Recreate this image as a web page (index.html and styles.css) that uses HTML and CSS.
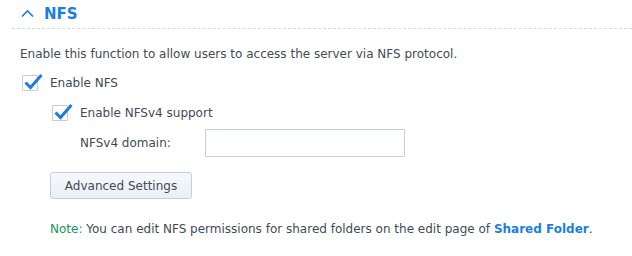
FILE: index.html
```html
<!DOCTYPE html>
<html lang="en">
<head>
  <meta charset="UTF-8">
  <title>NFS</title>
  <link rel="stylesheet" href="styles.css">
</head>
<body>
  <div class="panel">
    <div class="section-head">
      <svg class="chevron" width="13" height="9" viewBox="0 0 13 9">
        <path d="M1 7.5 L6.5 2 L12 7.5" fill="none" stroke="#1a7fe0" stroke-width="1.7"/>
      </svg>
      <span class="section-title">NFS</span>
    </div>

    <div class="section-body">
      <p class="desc">Enable this function to allow users to access the server via NFS protocol.</p>

      <label class="check">
        <span class="box">
          <svg width="20" height="18" viewBox="0 0 20 18">
            <path d="M2.5 9.5 L7.5 14.5 L18.5 2" fill="none" stroke="#1c7ce0" stroke-width="3"/>
          </svg>
        </span>
        Enable NFS
      </label>

      <div class="indent">
        <label class="check">
          <span class="box">
            <svg width="20" height="18" viewBox="0 0 20 18">
              <path d="M2.5 9.5 L7.5 14.5 L18.5 2" fill="none" stroke="#1c7ce0" stroke-width="3"/>
            </svg>
          </span>
          Enable NFSv4 support
        </label>

        <div class="field">
          <span class="field-label">NFSv4 domain:</span>
          <input class="text-input" type="text">
        </div>
      </div>

      <button class="btn">Advanced Settings</button>

      <p class="note"><span class="note-label">Note:</span> You can edit NFS permissions for shared folders on the edit page of <a class="link" href="#">Shared Folder</a>.</p>
    </div>
  </div>
</body>
</html>
```

FILE: styles.css
```css
* {
  margin: 0;
  padding: 0;
  box-sizing: border-box;
}

body {
  font-family: 'DejaVu Sans', Verdana, sans-serif;
  font-size: 12px;
  color: #414b55;
  background: #fff;
}

.panel {
  padding-left: 12px;
}

.section-head {
  display: flex;
  align-items: center;
  height: 29px;
  padding-left: 9px;
  padding-bottom: 1px;
  border-bottom: 1px dashed #d5dae0;
}

.chevron {
  margin-right: 10px;
  margin-top: -1px;
}

.section-title {
  font-size: 15px;
  font-weight: bold;
  color: #1a7fe0;
}

.section-body {
  padding: 17px 0 0 8px;
}

.desc {
  line-height: 16px;
  margin-bottom: 12px;
}

.check {
  display: flex;
  align-items: center;
  height: 18px;
  margin-left: 2px;
}

.box {
  position: relative;
  width: 16px;
  height: 16px;
  border: 1px solid #c5cdd8;
  border-radius: 1px;
  margin-right: 12px;
  background: #fff;
}

.box svg {
  position: absolute;
  left: 0;
  top: -3px;
}

.indent {
  padding-left: 30px;
  padding-top: 12px;
}

.field {
  display: flex;
  align-items: center;
  margin-top: 7px;
  padding-left: 30px;
}

.field-label {
  width: 125px;
}

.text-input {
  width: 200px;
  height: 28px;
  border: 1px solid #c5cfdc;
  border-radius: 1px;
  outline: none;
}

.btn {
  margin: 15px 0 0 30px;
  width: 142px;
  height: 27px;
  font-family: inherit;
  font-size: 12px;
  color: #414b55;
  background: linear-gradient(180deg, #f6f8fc 0%, #eaf0f8 100%);
  border: 1px solid #c5cfdc;
  border-radius: 3px;
}

.note {
  margin: 22px 0 0 30px;
  line-height: 16px;
}

.note-label {
  color: #109a5c;
}

.link {
  color: #1a7fe0;
  font-weight: bold;
  text-decoration: none;
}
```
